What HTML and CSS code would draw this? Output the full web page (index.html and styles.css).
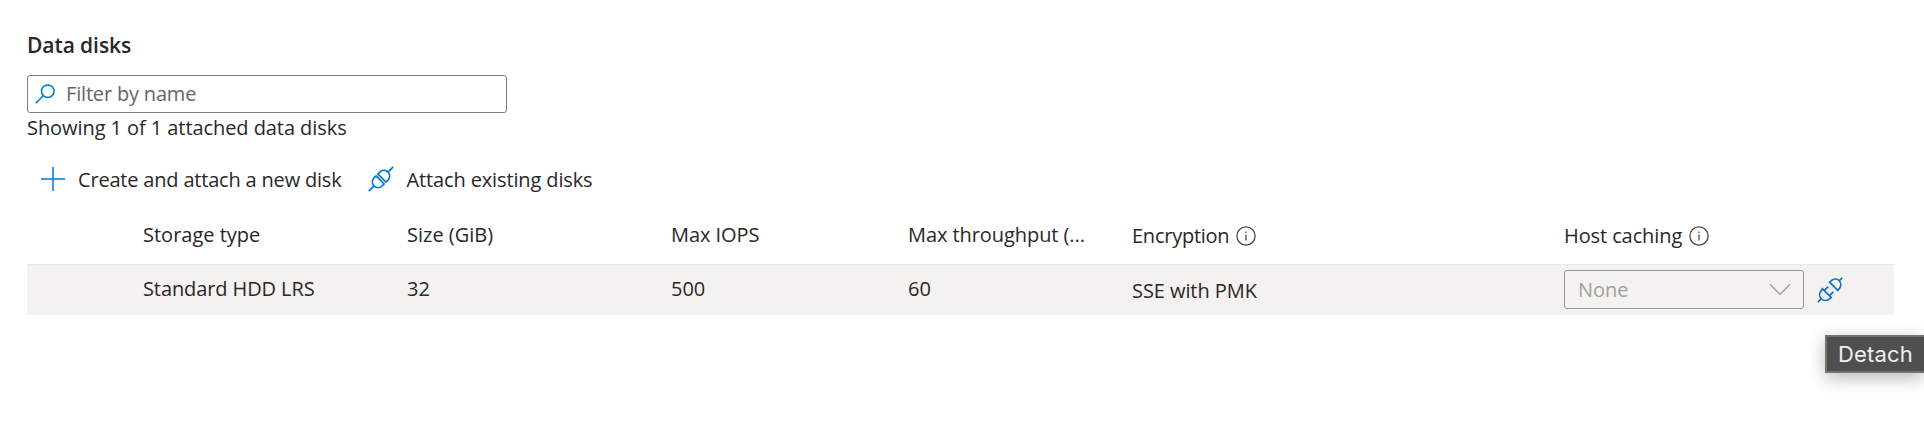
FILE: index.html
```html
<!DOCTYPE html>
<html lang="en">
<head>
<meta charset="utf-8">
<title>Data disks</title>
<link rel="stylesheet" href="styles.css">
</head>
<body>
<main class="disks">
  <h2 class="title">Data disks</h2>
  <div class="filter">
    <svg class="search-icon" width="20" height="20" viewBox="0 0 20 20"><circle cx="12.8" cy="7.2" r="6.3"/><path d="M8.3 11.7.8 19.2"/></svg>
    <span class="filter-text">Filter by name</span>
  </div>
  <p class="summary">Showing 1 of 1 attached data disks</p>
  <div class="toolbar">
    <div class="command">
      <svg class="plus-icon" width="24" height="24" viewBox="0 0 24 24"><path d="M12 0v24M0 12h24"/></svg>
      <span class="create">Create and attach a new disk</span>
    </div>
    <div class="command">
      <svg class="plug-icon" width="26" height="26" viewBox="0 0 26 26"><path d="M.8 25.2 5.6 20.4M20.4 5.6 25.2.8M8.1 9.9 16.1 17.9 13.6 20.4a5.7 5.7 0 0 1-8-8zM9.9 8.1 17.9 16.1 20.4 13.6a5.7 5.7 0 0 0-8-8z"/></svg>
      <span class="attach">Attach existing disks</span>
    </div>
  </div>
  <div class="grid header">
    <span></span>
    <span class="storage">Storage type</span>
    <span class="size">Size (GiB)</span>
    <span class="iops">Max IOPS</span>
    <span class="throughput">Max throughput (...</span>
    <span class="with-info"><span class="encryption">Encryption</span><svg class="info-icon" width="20" height="20" viewBox="0 0 20 20"><circle cx="10" cy="10" r="9.1"/><path d="M10 8.5v6M10 5.6v1.5"/></svg></span>
    <span class="with-info"><span class="host">Host caching</span><svg class="info-icon" width="20" height="20" viewBox="0 0 20 20"><circle cx="10" cy="10" r="9.1"/><path d="M10 8.5v6M10 5.6v1.5"/></svg></span>
  </div>
  <div class="grid row">
    <span></span>
    <span class="type-value">Standard HDD LRS</span>
    <span class="number">32</span>
    <span class="number">500</span>
    <span class="number">60</span>
    <span class="sse">SSE with PMK</span>
    <div class="caching">
      <div class="select"><span class="none">None</span><svg class="chevron" width="22" height="13" viewBox="0 0 22 13"><path d="M1 1.3 11 11.3 21 1.3"/></svg></div>
      <svg class="detach-icon" width="26" height="26" viewBox="0 0 26 26"><path d="M.8 25.2 4 22M22 4 25.2.8M4.8 11.2 14.8 21.2M7.6 13.2 11.2 9.6M12.8 18.4 16.4 14.8M5.6 12 4.2 13.6a6.2 6.2 0 0 0 0 8.2 6.2 6.2 0 0 0 8.2 0L14 20.4M12.6 5.2 20.8 13.4 22.3 11.6a6 6 0 0 0 0-7.9 6 6 0 0 0-7.9 0z"/></svg>
    </div>
  </div>
</main>
<div class="tooltip"><span class="tip-text">Detach</span></div>
</body>
</html>
```
FILE: styles.css
```css
* { box-sizing: border-box; }
body {
  margin: 0;
  height: 444px;
  overflow: hidden;
  background: #fff;
  color: #292827;
  font: 20px/28px "Open Sans", "Noto Sans", sans-serif;
}
svg { display: block; flex: none; fill: none; stroke: #0078d4; }
span { white-space: nowrap; }
.disks { padding: 31px 30px 0 27px; }
.title { margin: 0; height: 44px; font-size: 21px; line-height: 28px; font-weight: 600; letter-spacing: -.08px; }
.filter {
  width: 480px;
  height: 38px;
  border: 1px solid #7f7e7d;
  border-radius: 3px;
  display: flex;
  align-items: center;
  padding: 0 8px 0 7px;
  gap: 11px;
  color: #666;
}
.filter-text { letter-spacing: -.18px; }
.search-icon { stroke-width: 1.5; }
.summary { margin: 0; padding-top: 1px; height: 43px; letter-spacing: -.07px; }
.toolbar { display: flex; height: 46px; padding-left: 14px; align-items: center; gap: 26px; }
.command { display: flex; align-items: center; gap: 13px; }
.command span { padding-top: 2px; }
.create { letter-spacing: -.19px; }
.attach { letter-spacing: -.13px; }
.plus-icon { stroke-width: 1.5; }
.plug-icon, .detach-icon { stroke-width: 1.7; }
.grid { display: grid; grid-template-columns: 116px 264px 264px 237px 224px 432px 1fr; }
.header { height: 62px; align-items: start; padding-top: 19px; }
.iops, .throughput { letter-spacing: -.07px; }
.with-info { display: flex; align-items: center; gap: 7px; padding-top: 1px; }
.encryption { letter-spacing: -.25px; }
.host { letter-spacing: -.1px; }
.info-icon { stroke: #484746; stroke-width: 1.3; }
.row { height: 51px; background: #f3f2f1; border-top: 1px solid #e9e8e6; padding-bottom: 1px; align-items: center; }
.type-value, .number { padding-bottom: 1px; }
.type-value { letter-spacing: -.1px; }
.sse { padding-top: 2px; letter-spacing: -.07px; }
.caching { display: flex; align-items: center; gap: 13px; }
.select {
  width: 240px;
  height: 39px;
  border: 1px solid #999796;
  border-radius: 3px;
  display: flex;
  align-items: center;
  justify-content: space-between;
  padding: 0 12px 0 13px;
  color: #a19f9d;
}
.chevron { stroke: #a19f9d; stroke-width: 1.4; }
.detach-icon { stroke: #1472c4; }
.tooltip {
  position: absolute;
  left: 1825px;
  top: 335px;
  width: 99px;
  height: 38px;
  padding-left: 11px;
  border: 2px solid #737373;
  border-right: 0;
  background: #4f4f4f;
  color: #efefef;
  font: 22px/34px Inter, sans-serif;
  letter-spacing: .15px;
  box-shadow: 0 5px 18px rgba(0, 0, 0, .28);
}
```
